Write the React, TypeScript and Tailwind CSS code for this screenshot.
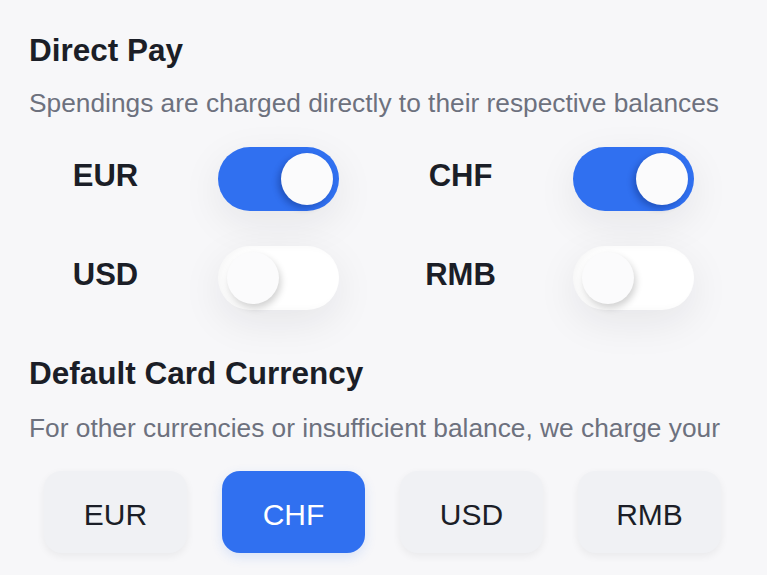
import { useState } from 'react'

const currencies = ['EUR', 'CHF', 'USD', 'RMB']

function Toggle({ on, onClick }: { on: boolean; onClick: () => void }) {
  return (
    <button
      type="button"
      onClick={onClick}
      className={`flex h-[64px] w-[121px] items-center rounded-full px-[6px] ${
        on
          ? 'justify-end bg-[#3070f0] shadow-[0_12px_40px_rgba(20,24,40,0.08)]'
          : 'justify-start bg-white shadow-[inset_5px_0_8px_rgba(0,0,0,0.035),0_12px_40px_rgba(20,24,40,0.08)]'
      }`}
    >
      <span
        className={`block h-[52px] w-[52px] rounded-full bg-[#fbfbfc] ${
          on ? 'shadow-[-3px_3px_6px_rgba(0,20,80,0.3)]' : 'ml-[3px] shadow-[2px_4px_7px_rgba(0,0,0,0.18)]'
        }`}
      />
    </button>
  )
}

export default function App() {
  const [direct, setDirect] = useState<Record<string, boolean>>({ EUR: true, CHF: true, USD: false, RMB: false })
  const [card, setCard] = useState('CHF')

  const flip = (c: string) => setDirect({ ...direct, [c]: !direct[c] })

  return (
    <div className="h-[575px] w-[767px] overflow-hidden bg-[#f7f7f9] font-['Liberation_Sans',Arial,sans-serif]">
      <div className="px-[29px] pt-[32px]">
        <h2 className="text-[31.5px] font-bold leading-[36px] text-[#1b1e27]">Direct Pay</h2>
        <p className="mt-[20px] whitespace-nowrap text-[26.3px] leading-[30px] text-[#6d717e]">
          Spendings are charged directly to their respective balances
        </p>
      </div>

      <div className="mt-[29px] grid grid-cols-[355px_355px] gap-y-[35px] pl-[44px]">
        {currencies.map((c) => (
          <div key={c} className="flex items-center">
            <span className="w-[123px] pb-[6px] text-center text-[31px] font-bold text-[#1b1e27]">{c}</span>
            <div className="ml-[51px]">
              <Toggle on={direct[c]} onClick={() => flip(c)} />
            </div>
          </div>
        ))}
      </div>

      <div className="px-[29px] pt-[45px]">
        <h2 className="text-[31.5px] font-bold leading-[36px] text-[#1b1e27]">Default Card Currency</h2>
        <p className="mt-[22px] whitespace-nowrap text-[26.3px] leading-[30px] text-[#6d717e]">
          For other currencies or insufficient balance, we charge your
        </p>
      </div>

      <div className="mt-[28px] flex gap-[35px] pl-[44px]">
        {currencies.map((c) => (
          <button
            key={c}
            type="button"
            onClick={() => setCard(c)}
            className={`h-[82px] w-[143px] rounded-[18px] pt-[4px] text-[30px] ${
              card === c
                ? 'bg-[#3070f0] text-white shadow-[0_4px_12px_rgba(48,112,240,0.15)]'
                : 'bg-[#f0f1f4] text-[#1b1e27] shadow-[0_3px_8px_rgba(0,0,0,0.06)]'
            }`}
          >
            {c}
          </button>
        ))}
      </div>
    </div>
  )
}
